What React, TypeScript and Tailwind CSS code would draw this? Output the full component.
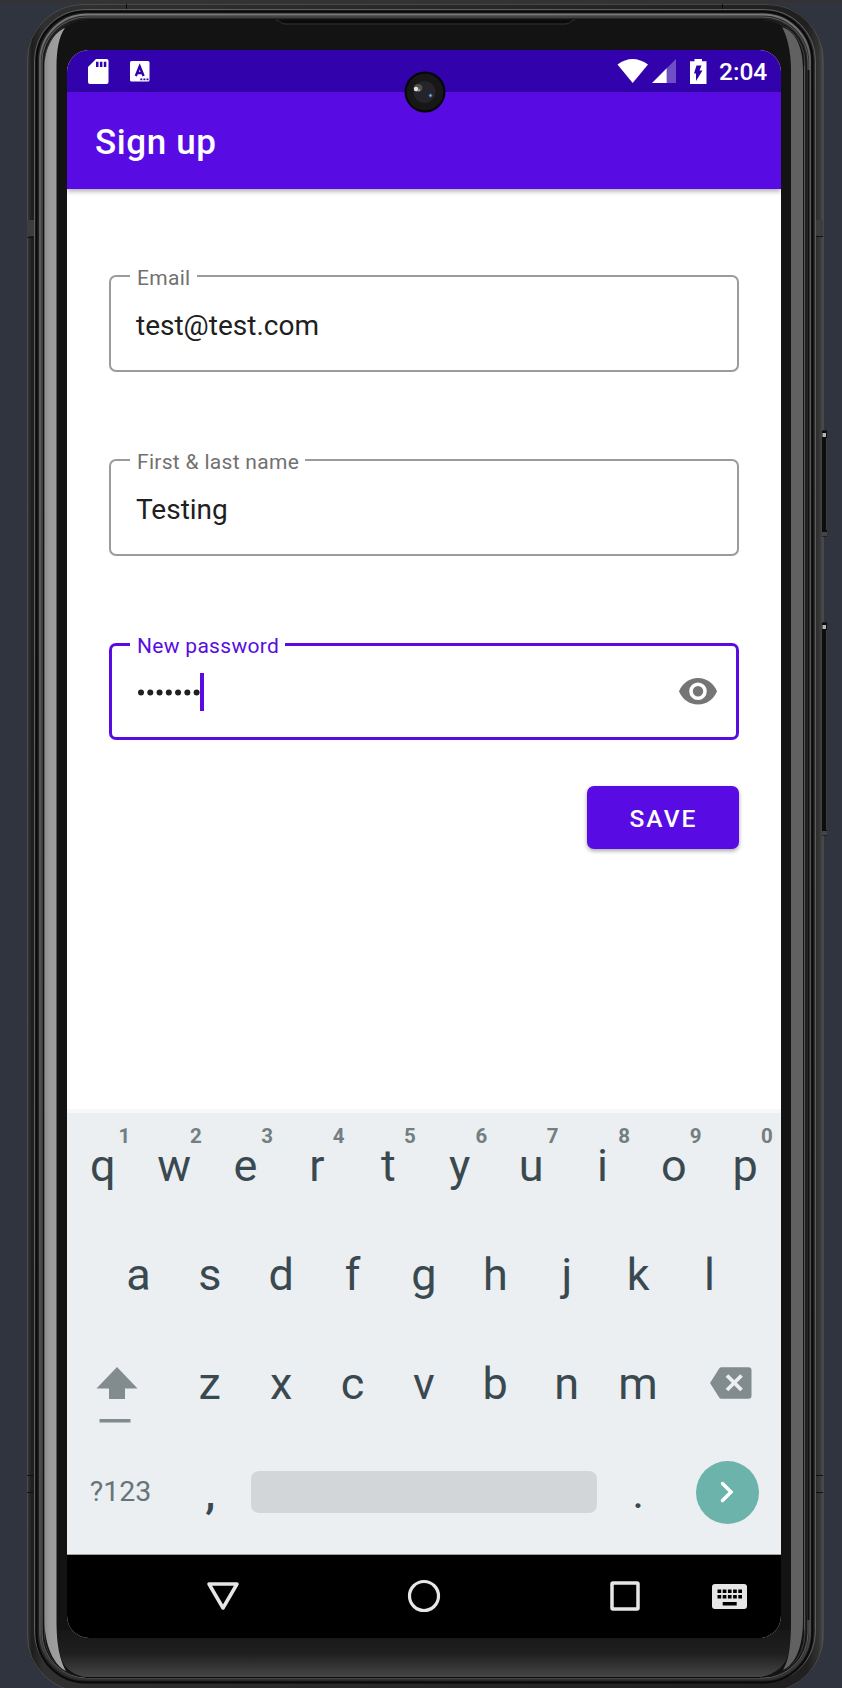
import type { ReactNode } from "react";

function DeviceFrame() {
  return (
    <svg className="absolute inset-0" width="842" height="1688" viewBox="0 0 842 1688" aria-hidden="true">
      <defs>
        <linearGradient id="bezelBottom" x1="0" y1="0" x2="0" y2="1">
          <stop offset="0" stopColor="#171717" />
          <stop offset="0.5" stopColor="#1f1f1f" />
          <stop offset="1" stopColor="#464646" />
        </linearGradient>
        <linearGradient id="edge" x1="0" y1="0" x2="1" y2="0">
          <stop offset="0" stopColor="#3a3a3a" />
          <stop offset="0.006" stopColor="#1d1d1d" />
          <stop offset="0.02" stopColor="#303030" />
          <stop offset="0.98" stopColor="#202020" />
          <stop offset="0.994" stopColor="#333333" />
          <stop offset="1" stopColor="#4a4a4a" />
        </linearGradient>
        <linearGradient id="leftStrip" x1="0" y1="0" x2="1" y2="0">
          <stop offset="0" stopColor="#8c8c8c" />
          <stop offset="0.25" stopColor="#9a9a9a" />
          <stop offset="1" stopColor="#a4a4a4" />
        </linearGradient>
        <linearGradient id="ring" x1="0" y1="0" x2="0" y2="1">
          <stop offset="0" stopColor="#7a7a7a" />
          <stop offset="0.03" stopColor="#5c5c5c" />
          <stop offset="0.97" stopColor="#4a4a4a" />
          <stop offset="1" stopColor="#303030" />
        </linearGradient>
      </defs>
      <rect x="0" y="0" width="842" height="3" fill="#333333" />
      <rect x="27" y="4" width="796.500" height="1688" rx="56" fill="url(#edge)" />
      <rect x="27.500" y="4.500" width="795.500" height="1687" rx="55.500" fill="none" stroke="#555555" strokeOpacity="0.7" />
      <path d="M126.500 4v5M722.500 4v7" stroke="#0c0c0c" />
      <path d="M27 220h8v16h-8zM814 220h9v16h-9z" fill="#3d3d3d" />
      <path d="M27 237.500h8M814 236.500h9M27 1475.500h8M27 1492.500h8M814 1475.500h9M814 1492.500h9" stroke="#111111" />
      <rect x="34.500" y="9.500" width="781" height="1673" rx="51" fill="#2d2d2d" stroke="#5d5d5d" />
      <rect x="36.500" y="11.500" width="776" height="1671" rx="49" fill="#202020" stroke="#090909" strokeWidth="2" />
      <rect x="40" y="14.500" width="770" height="1665" rx="47" fill="#2c2c2c" stroke="url(#ring)" strokeWidth="2" />
      <rect x="42" y="17" width="766" height="1661" rx="45" fill="#252525" stroke="#5a5a5a" />
      <rect x="43.500" y="19.500" width="762.500" height="1657.500" rx="43" fill="#3a3a3a" stroke="#111111" />
      <path d="M808.500 70V1620" stroke="#111111" strokeWidth="2" />
      <rect x="45" y="20" width="759" height="1657" rx="42" fill="#131313" />
      <path d="M57 1630H791C791 1652 788 1672 760 1677H85C60 1672 57 1652 57 1630Z" fill="url(#bezelBottom)" />
      <path d="M65 28C55 32 44.500 46 44.500 68V1620C44.500 1646 54 1665 66 1671C60 1660 56.500 1646 56.500 1620V68C56.500 49 59 36 65 28Z" fill="url(#leftStrip)" />
      <path d="M782 27C795 31 803 46 803 70V1620C803 1646 796 1664 783 1670C789 1660 791 1646 791 1620V70C791 51 787 36 782 27Z" fill="#616161" />
      <path d="M804.500 66V1630" stroke="#555555" />
      <path d="M276 20C280 20 280 24 286 24H565C571 24 570 20 575 20" fill="#0b0b0b" stroke="#343434" />
      <path d="M85 1677.500H760" stroke="#0c0c0c" />
      <path d="M822 430.500h5V536.500h-5zM822 622.500h5V835.500h-5z" fill="#0d0d0d" />
      <path d="M826.500 438v92M826.500 630v200" stroke="#3c3c3c" />
      <path d="M822.500 433h3.500v4h-3.500zM822.500 625h3.500v4h-3.500z" fill="#b5b5b5" />
      <path d="M822 532h5v4h-5zM822 831h5v4h-5z" fill="#444444" />
    </svg>
  );
}

function StatusBar() {
  return (
    <div className="flex h-[42px] shrink-0 items-center bg-[#3203ac] pr-[14px] pl-[21px] text-white">
      <svg width="21" height="25" viewBox="0 0 21 25" className="shrink-0">
        <path d="M8 0h10.500a2 2 0 0 1 2 2v21a2 2 0 0 1-2 2H2a2 2 0 0 1-2-2V8Z" fill="#ffffff" />
        <path d="M8 2.700h2.500v5.300H8zM11.900 2.700h2.500v5.300h-2.500zM15.800 2.700h2.500v5.300h-2.500z" fill="#3203ac" />
      </svg>
      <svg width="20" height="21" viewBox="0 0 20 21" className="ml-[21px] shrink-0">
        <rect width="19.500" height="20.500" rx="1.500" fill="#ffffff" />
        <path d="M5.800 15 9.700 5.500 13.600 15M7 12h5.500" fill="none" stroke="#3203ac" strokeWidth="2.400" />
        <path d="M10.300 17.500h2v1.800h-2zM13.400 17.500h2v1.800h-2zM16.500 17.500h2v1.800h-2z" fill="#3203ac" />
      </svg>
      <div className="flex-1" />
      <svg width="32" height="24" viewBox="0 0 32 24" className="shrink-0">
        <path d="M0.500 5.500Q15.500-5.500 31 5.500L15.700 24Z" fill="#ffffff" />
      </svg>
      <svg width="24" height="24" viewBox="0 0 24 24" className="ml-[3px] shrink-0">
        <path d="M24 0V24H14.500V9.500Z" fill="#ffffff" fillOpacity="0.3" />
        <path d="M14.700 9.300V24H0Z" fill="#ffffff" />
      </svg>
      <svg width="17" height="25" viewBox="0 0 17 25" className="ml-[14px] shrink-0">
        <path d="M4.500 0h7.500v2.200h4.500V25H0V2.200h4.500Z" fill="#ffffff" />
        <path d="M6.500 6.500h5L9.500 11.500H12.500L6 22V14.500H4Z" fill="#3203ac" />
      </svg>
      <span className="ml-[12px] w-[48px] pt-[2px] text-[24.500px] leading-none font-medium whitespace-nowrap">2:04</span>
    </div>
  );
}

function Field({ label, value, active = false, children }: { label: string; value?: string; active?: boolean; children?: ReactNode }) {
  return (
    <div
      className={
        active
          ? "relative flex h-[97px] items-center rounded-[7px] border-[3px] border-[#580ce3] pr-[19px] pl-[25px]"
          : "relative flex h-[97px] items-center rounded-[7px] border-2 border-[#9b9b9b] pr-[18px] pl-[25px]"
      }
    >
      <label
        className={
          active
            ? "absolute top-[-12px] left-[18px] bg-white pr-[6px] pl-[7px] text-[21px] leading-[24px] tracking-[0.300px] whitespace-nowrap text-[#580ce3]"
            : "absolute top-[-11px] left-[19px] bg-white pr-[6px] pl-[7px] text-[21px] leading-[24px] tracking-[0.300px] whitespace-nowrap text-[#717171]"
        }
      >
        {label}
      </label>
      {value && <span className="pt-[5px] text-[28px] leading-none text-[#202020]">{value}</span>}
      {children}
    </div>
  );
}

const TOP_ROW = ["q", "w", "e", "r", "t", "y", "u", "i", "o", "p"];
const HOME_ROW = ["a", "s", "d", "f", "g", "h", "j", "k", "l"];
const BOTTOM_ROW = ["z", "x", "c", "v", "b", "n", "m"];

function Key({ char, hint }: { char: string; hint?: string }) {
  return (
    <div className="relative flex h-full w-[71.400px] shrink-0 items-center justify-center pb-[5px] text-[45px] leading-none text-[#3a4950]">
      {char}
      {hint && (
        <span className="absolute top-[11px] right-[3px] w-[22px] text-center text-[20.500px] leading-[24px] font-bold text-[#727e80]">
          {hint}
        </span>
      )}
    </div>
  );
}

function Keyboard() {
  return (
    <div className="flex h-[442px] shrink-0 flex-col border-b border-[#9da1a3] bg-[#ebeff2]">
      <div className="flex h-[109.400px]">
        {TOP_ROW.map((c, i) => (
          <Key key={c} char={c} hint={String((i + 1) % 10)} />
        ))}
      </div>
      <div className="flex h-[109.400px] justify-center">
        {HOME_ROW.map((c) => (
          <Key key={c} char={c} />
        ))}
      </div>
      <div className="flex h-[109.400px]">
        <div className="flex w-[107px] flex-col pt-[35px] pl-[29px]">
          <svg width="42" height="57" viewBox="0 0 42 57">
            <path d="M21 0 41.500 21.500H29V32H13V21.500H0.500Z" fill="#828b8d" />
            <path d="M3.500 52h31v3.500h-31z" fill="#828b8d" />
          </svg>
        </div>
        {BOTTOM_ROW.map((c) => (
          <Key key={c} char={c} />
        ))}
        <div className="pt-[35px] pl-[36px]">
          <svg width="42" height="33" viewBox="0 0 42 33">
            <path d="M11.500 0.300H38.500a3 3 0 0 1 3 3v25.500a3 3 0 0 1-3 3H11.500a3 3 0 0 1-2.300-1.200L0 16 9.200 1.500A3 3 0 0 1 11.500 0.300Z" fill="#828b8d" />
            <path d="m17 8.500 14.500 14.500M31.500 8.500 17 23" stroke="#ebeff2" strokeWidth="3.800" />
          </svg>
        </div>
      </div>
      <div className="flex h-[109.400px] items-center pb-[7px]">
        <span className="w-[107px] text-center text-[28.500px] leading-none text-[#66747a]">?123</span>
        <span className="w-[71.400px] pl-px text-center text-[45px] leading-none font-medium text-[#3a4950]">,</span>
        <span className="ml-[6px] h-[42px] w-[346px] rounded-[8px] bg-[#d2d6d9]" />
        <span className="ml-[5px] w-[71.400px] text-center text-[45px] leading-none text-[#3a4950]">.</span>
        <span className="ml-[22px] flex size-[63px] items-center justify-center rounded-full bg-[#6bb3ab]">
          <svg width="14" height="22" viewBox="0 0 14 22">
            <path d="m2.500 2.500 8.500 8.500-8.500 8.500" fill="none" stroke="#ffffff" strokeWidth="3.500" strokeLinecap="round" />
          </svg>
        </span>
      </div>
    </div>
  );
}

function NavBar() {
  return (
    <div className="flex h-[83px] shrink-0 items-center bg-black pb-px">
      <svg width="34" height="30" viewBox="0 0 34 30" className="ml-[139px]">
        <path d="M3 3H31L17 27Z" fill="none" stroke="#e6e6e6" strokeWidth="3.500" strokeLinejoin="round" />
      </svg>
      <svg width="34" height="34" viewBox="0 0 34 34" className="ml-[167px]">
        <circle cx="17" cy="17" r="14.500" fill="none" stroke="#e6e6e6" strokeWidth="3.200" />
      </svg>
      <svg width="30" height="30" viewBox="0 0 30 30" className="ml-[169px]">
        <rect x="2" y="2" width="26" height="26" rx="1" fill="none" stroke="#e6e6e6" strokeWidth="3.500" />
      </svg>
      <svg width="36" height="25" viewBox="0 0 36 25" className="ml-[72px]">
        <rect width="35" height="25" rx="3" fill="#e6e6e6" />
        <path
          d="M5.500 5.500h3.700v3.500H5.500zM10.700 5.500h3.700v3.500h-3.700zM15.900 5.500h3.700v3.500h-3.700zM21.100 5.500h3.700v3.500h-3.700zM26.300 5.500h3.700v3.500h-3.700zM5.500 11h3.700v3.500H5.500zM10.700 11h3.700v3.500h-3.700zM15.900 11h3.700v3.500h-3.700zM21.100 11h3.700v3.500h-3.700zM26.300 11h3.700v3.500h-3.700zM10.700 18h14v3.500h-14z"
          fill="#000000"
        />
      </svg>
    </div>
  );
}

function CameraHole() {
  return (
    <svg width="42" height="42" viewBox="0 0 42 42" className="absolute top-[21px] left-[337px] z-20">
      <circle cx="21" cy="21" r="20.500" fill="#050505" />
      <circle cx="21" cy="21" r="18.500" fill="#171718" />
      <circle cx="20.500" cy="21" r="11" fill="#24242a" />
      <ellipse cx="14" cy="17" rx="4.500" ry="4" fill="#6f706c" fillOpacity="0.6" />
      <circle cx="12" cy="18" r="2.200" fill="#e4e4d8" />
      <circle cx="15" cy="19" r="1.300" fill="#9a8498" />
      <circle cx="26.500" cy="24.500" r="2" fill="#315a8e" />
      <circle cx="26.500" cy="24.500" r="0.900" fill="#9bc8ef" />
    </svg>
  );
}

export default function App() {
  return (
    <div className="relative h-[1688px] w-[842px] overflow-hidden bg-[#30343f] pt-[50px] pl-[67px] font-['Roboto',sans-serif]">
      <DeviceFrame />
      <div className="relative flex h-[1588px] w-[714px] flex-col overflow-hidden rounded-[22px] bg-white">
        <StatusBar />
        <header className="z-10 flex h-[97px] shrink-0 items-center bg-[#580ce3] pt-[4px] pl-[28px] shadow-[0_2px_5px_rgba(0,0,0,0.35)]">
          <h1 className="text-[35px] leading-none font-medium tracking-[0.600px] text-white">Sign up</h1>
        </header>
        <main className="flex flex-1 flex-col gap-[87px] px-[42px] pt-[86px]">
          <Field label="Email" value="test@test.com" />
          <Field label="First &amp; last name" value="Testing" />
          <div className="flex flex-col">
            <Field label="New password" active>
              <div className="flex flex-1 items-center">
                <svg width="63" height="10" viewBox="0 0 63 10">
                  {[0, 1, 2, 3, 4, 5, 6].map((i) => (
                    <circle key={i} cx={4 + i * 9.27} cy="5.500" r="3" fill="#202020" />
                  ))}
                </svg>
                <span className="h-[38px] w-[4px] bg-[#580ce3]" />
              </div>
              <svg width="38" height="27" viewBox="0 0 38 27">
                <path d="M19 0C10.400 0 3 5.500 0 13.200 3 21 10.400 26.500 19 26.500S35 21 38 13.200C35 5.500 27.600 0 19 0Z" fill="#757575" />
                <circle cx="19" cy="13.200" r="7" fill="#757575" stroke="#ffffff" strokeWidth="3.600" />
              </svg>
            </Field>
            <button className="mt-[46px] flex h-[63px] w-[152px] items-center justify-center self-end rounded-[7px] bg-[#580ce3] pt-[3px] pl-px text-[24.500px] leading-none font-medium tracking-[2.100px] text-white shadow-[0_2px_4px_rgba(0,0,0,0.35)]">
              SAVE
            </button>
          </div>
        </main>
        <div className="h-[4px] shrink-0 bg-[#f7f7f7]" />
        <Keyboard />
        <NavBar />
        <CameraHole />
      </div>
    </div>
  );
}
